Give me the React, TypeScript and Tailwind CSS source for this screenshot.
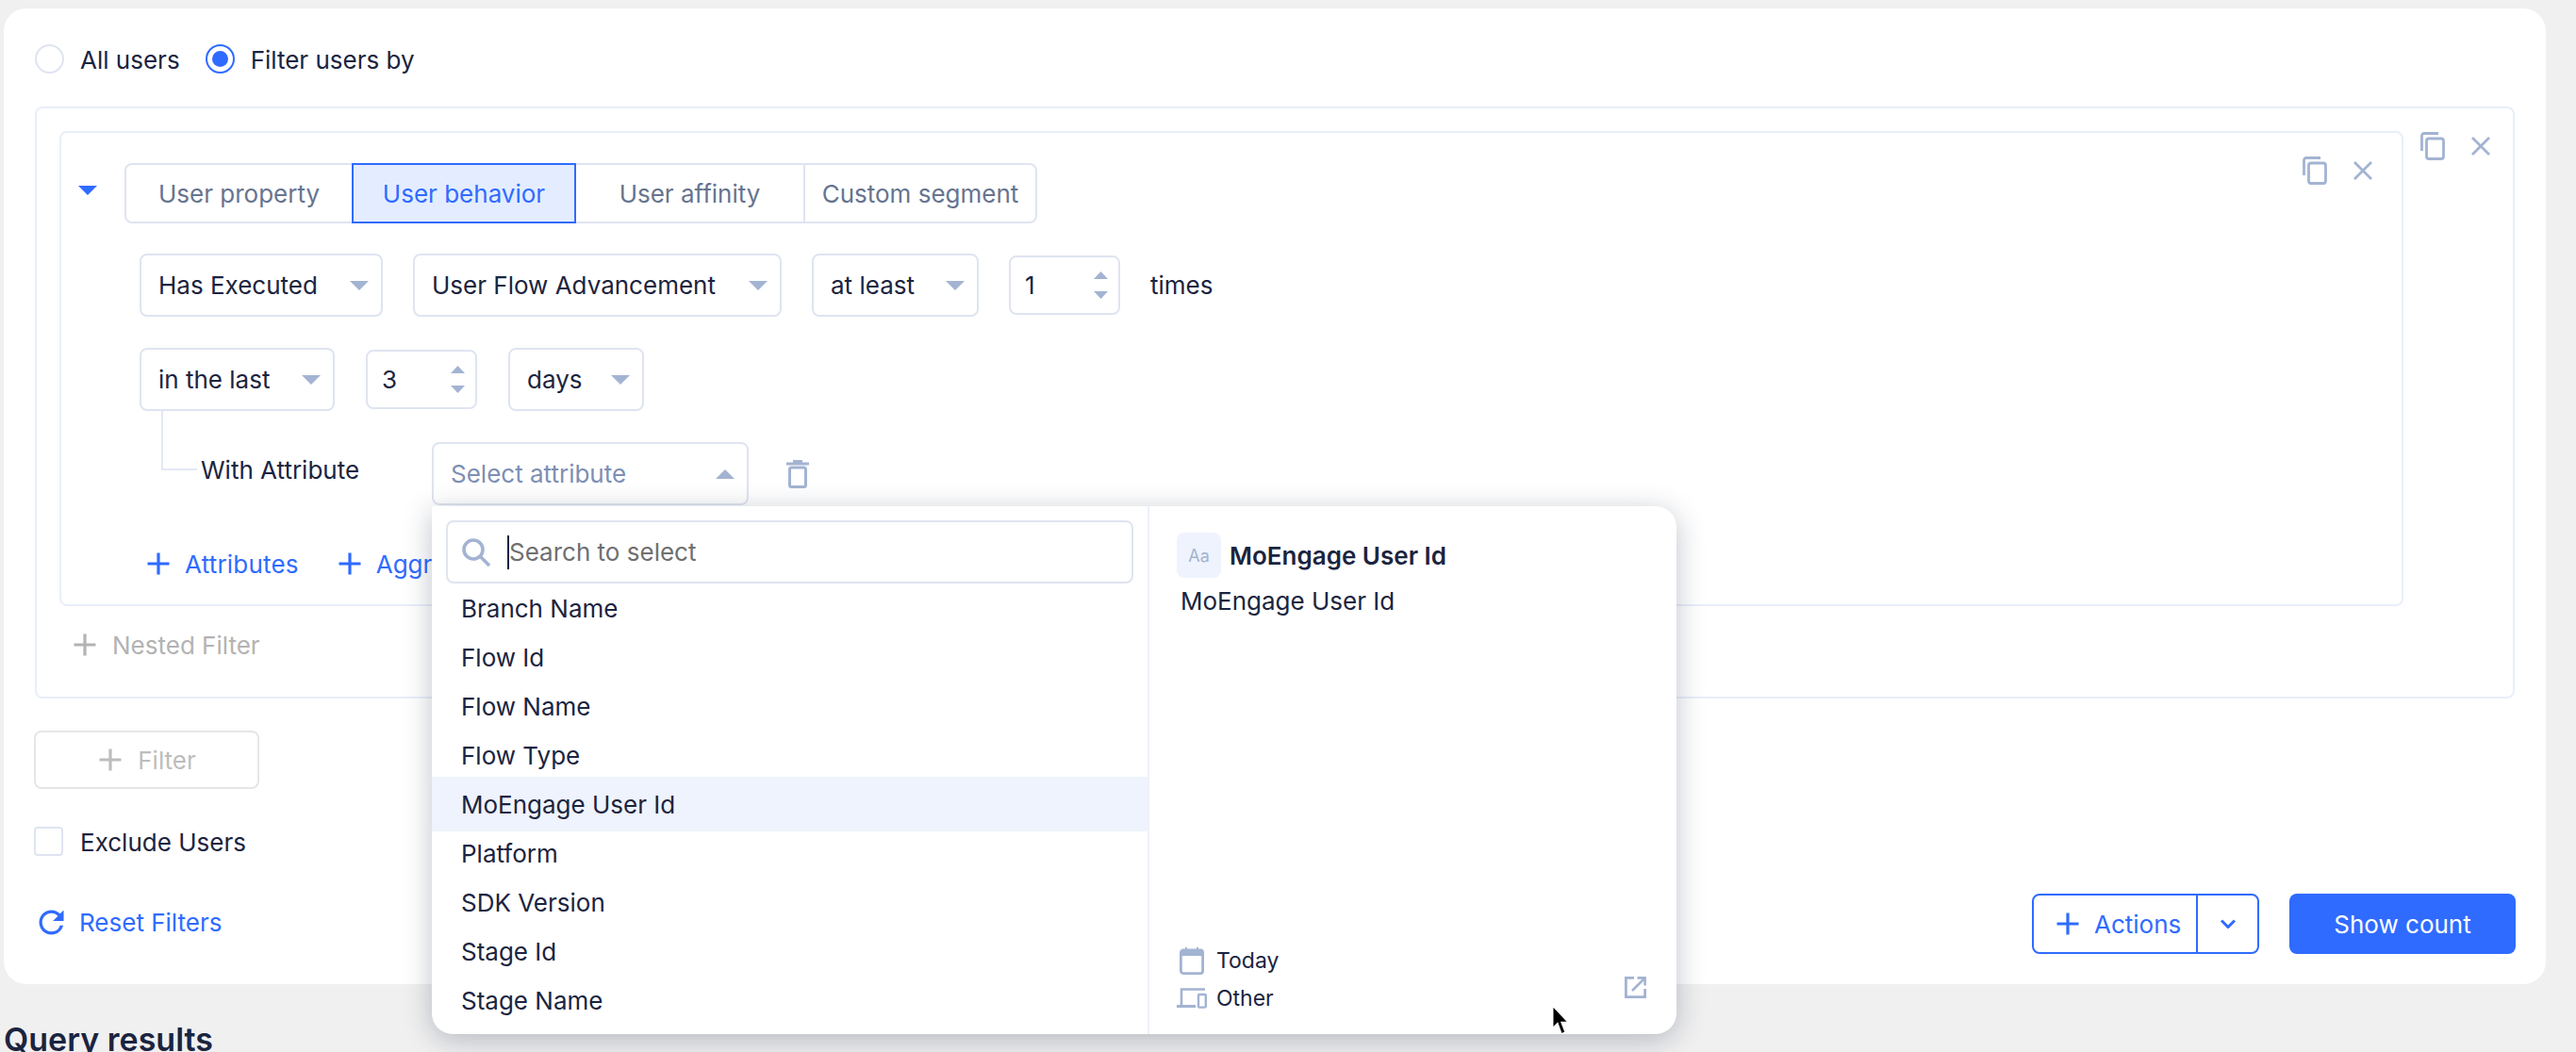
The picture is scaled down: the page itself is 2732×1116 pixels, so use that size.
import { MdRefresh } from "react-icons/md";

function Caret({ up = false, className = "" }: { up?: boolean; className?: string }) {
  return (
    <svg viewBox="0 0 20 10" className={`w-[20px] h-[10px] shrink-0 ${className}`}>
      <path d={up ? "M10 0 L20 10 L0 10 Z" : "M0 0 L20 0 L10 10 Z"} fill="currentColor" />
    </svg>
  );
}

function Plus({ className = "" }: { className?: string }) {
  return (
    <svg viewBox="0 0 24 24" className={`w-[24px] h-[24px] shrink-0 ${className}`}>
      <path d="M12 0.5 V23.5 M0.5 12 H23.5" stroke="currentColor" strokeWidth="3.2" fill="none" />
    </svg>
  );
}

function CopyIcon() {
  return (
    <svg viewBox="0 0 26 30" className="w-[26px] h-[30px] shrink-0">
      <path d="M1.5 20 V4 a2.5 2.5 0 0 1 2.5 -2.5 H19" stroke="currentColor" strokeWidth="2.8" fill="none" />
      <rect x="6.5" y="7" width="18" height="21.5" rx="2.5" stroke="currentColor" strokeWidth="2.8" fill="none" />
    </svg>
  );
}

function CloseIcon() {
  return (
    <svg viewBox="0 0 20 20" className="w-[20px] h-[20px] shrink-0">
      <path d="M1 1 L19 19 M19 1 L1 19" stroke="currentColor" strokeWidth="2.8" fill="none" />
    </svg>
  );
}

function Select({ label, width, placeholder = false, up = false }: { label: string; width: string; placeholder?: boolean; up?: boolean }) {
  return (
    <div className={`${width} h-[67px] rounded-lg border-2 border-[#dfe4f1] flex items-center justify-between pl-[18px] pr-[13px] bg-white`}>
      <span className={placeholder ? "text-[#7d8fb3]" : "text-[#1b2440]"}>{label}</span>
      <Caret up={up} className="text-[#a3b3d2]" />
    </div>
  );
}

function NumberBox({ value }: { value: string }) {
  return (
    <div className="w-[118px] h-[63px] rounded-lg border-2 border-[#dfe4f1] flex items-center justify-between pl-[15px] pr-[11px] text-[#1b2440]">
      <span>{value}</span>
      <div className="flex flex-col gap-[13px] text-[#a3b3d2]">
        <svg viewBox="0 0 15 8" className="w-[15px] h-[8px]"><path d="M7.5 0 L15 8 L0 8 Z" fill="currentColor" /></svg>
        <svg viewBox="0 0 15 8" className="w-[15px] h-[8px]"><path d="M0 0 L15 0 L7.5 8 Z" fill="currentColor" /></svg>
      </div>
    </div>
  );
}

function Tab({ label, width, active = false, divider = false }: { label: string; width: string; active?: boolean; divider?: boolean }) {
  return (
    <div
      className={`${width} flex items-center justify-center ${
        active ? "h-[64px] -my-[2px] bg-[#e4edff] border-2 border-[#2f6bff] text-[#2f6bff]" : "h-full text-[#66748f]"
      } ${divider ? "border-l-2 border-[#dfe4f1]" : ""}`}
    >
      {label}
    </div>
  );
}

const attrs = ["Branch Name", "Flow Id", "Flow Name", "Flow Type", "MoEngage User Id", "Platform", "SDK Version", "Stage Id", "Stage Name"];

function Dropdown() {
  return (
    <div className="absolute left-0 top-[68px] z-10 w-[1320px] h-[560px] bg-white rounded-[22px] rounded-tl-none shadow-[0_6px_30px_rgba(30,40,70,0.28)] flex overflow-hidden">
      <div className="w-[761px] border-r-2 border-[#eef1f8] flex flex-col">
        <div className="mx-[15px] mt-[15px] h-[67px] rounded-lg border-2 border-[#dfe4f1] flex items-center pl-[15px] text-[#6f6f6f] shrink-0">
          <svg viewBox="0 0 30 30" className="w-[30px] h-[30px] shrink-0 text-[#a3b3d2]">
            <circle cx="12" cy="12" r="10" stroke="currentColor" strokeWidth="3.6" fill="none" />
            <path d="M19 19 L29 29" stroke="currentColor" strokeWidth="3.6" />
          </svg>
          <span className="ml-[18px] border-l-2 border-[#1b2440] h-[36px] leading-[36px]">Search to select</span>
        </div>
        <div className="flex flex-col">
          {attrs.map((a) =>
            a === "MoEngage User Id" ? (
              <div key={a} className="h-[58px] -my-[3px] bg-[#eff3fd] flex items-center pl-[31px] text-[#1b2440]">{a}</div>
            ) : (
              <div key={a} className="h-[52px] flex items-center pl-[31px] text-[#1b2440]">{a}</div>
            )
          )}
        </div>
      </div>
      <div className="flex-1 relative pl-[29px] pt-[28px] flex flex-col">
        <div className="flex items-center gap-[9px]">
          <div className="w-[47px] h-[48px] rounded-lg bg-[#eff3fd] flex items-center justify-center text-[18px] text-[#a3b3d2]">Aa</div>
          <span className="font-semibold text-[#1b2440]">MoEngage User Id</span>
        </div>
        <div className="ml-[4px] mt-[5px] text-[#1b2440]">MoEngage User Id</div>
        <div className="mt-auto mb-[22px] flex flex-col gap-[8px] text-[23px] text-[#1b2440]">
          <div className="h-[32px] flex items-center">
            <svg viewBox="0 0 26 29" className="w-[26px] h-[29px] ml-[3px] text-[#a3b3d2]">
              <rect x="1.4" y="3" width="23.2" height="24.6" rx="2.5" stroke="currentColor" strokeWidth="2.8" fill="none" />
              <path d="M1.4 3 H24.6 V9 H1.4 Z M6 0 H8 V4 H6 Z M18 0 H20 V4 H18 Z" fill="currentColor" />
            </svg>
            <span className="ml-[13px]">Today</span>
          </div>
          <div className="h-[32px] flex items-center">
            <svg viewBox="0 0 32 22" className="w-[32px] h-[22px] text-[#a3b3d2]">
              <path d="M30 1.5 H5 V18" stroke="currentColor" strokeWidth="2.6" fill="none" />
              <path d="M0 18 H20 V21 H0 Z" fill="currentColor" />
              <rect x="23" y="7" width="7.8" height="13.6" rx="1" stroke="currentColor" strokeWidth="2.4" fill="none" />
            </svg>
            <span className="ml-[10px]">Other</span>
          </div>
        </div>
        <svg viewBox="0 0 23 23" className="absolute right-[32px] bottom-[38px] w-[23px] h-[23px] text-[#a3b3d2]">
          <path d="M10 1.4 H1.4 V21.6 H21.6 V13" stroke="currentColor" strokeWidth="2.8" fill="none" />
          <path d="M8 15 L21 2 M13.5 1.4 H21.6 V9.5" stroke="currentColor" strokeWidth="2.6" fill="none" />
        </svg>
        <svg viewBox="0 0 20 32" className="absolute left-[425px] top-[529px] w-[22px] h-[33px]">
          <path d="M2 1 L2 24 L7 19 L11 30 L15 28 L11 18 L18 18 Z" fill="#000" stroke="#fff" strokeWidth="1.4" />
        </svg>
      </div>
    </div>
  );
}

export default function App() {
  return (
    <div className="w-[2732px] h-[1116px] overflow-hidden bg-[#f0f0f0] pt-[9px] text-[26px] text-[#1b2440] font-['Inter','Liberation_Sans',sans-serif]">
      <div className="ml-[4px] w-[2696px] h-[1035px] bg-white rounded-[24px] px-[33px] pt-[38px]">
        <div className="h-[31px] flex items-center">
          <div className="w-[31px] h-[31px] rounded-full border-2 border-[#dfe4f1]" />
          <span className="ml-[17px] pt-[2px]">All users</span>
          <div className="ml-[27px] w-[31px] h-[31px] rounded-full border-2 border-[#2f6bff] flex items-center justify-center">
            <div className="w-[17px] h-[17px] rounded-full bg-[#2f6bff]" />
          </div>
          <span className="ml-[17px] pt-[2px]">Filter users by</span>
        </div>

        <div className="mt-[35px] w-[2630px] h-[628px] rounded-lg border-2 border-[#e9eef9] pl-[24px] pt-[24px]">
          <div className="flex items-start">
            <div className="w-[2486px] h-[504px] rounded-lg border-2 border-[#e9eef9] relative pl-[67px] pt-[32px]">
              <div className="absolute left-[18px] top-[56px]"><Caret className="text-[#2f6bff]" /></div>
              <div className="absolute right-[31px] top-[25px] h-[30px] flex items-center gap-[28px] text-[#a3b3d2]">
                <CopyIcon />
                <CloseIcon />
              </div>

              <div className="w-[968px] h-[64px] rounded-lg border-2 border-[#dfe4f1] flex">
                <Tab label="User property" width="w-[239px]" />
                <Tab label="User behavior" width="w-[238px]" active />
                <Tab label="User affinity" width="w-[241px]" />
                <Tab label="Custom segment" width="w-[246px]" divider />
              </div>

              <div className="ml-[16px] mt-[32px] flex items-center">
                <Select label="Has Executed" width="w-[258px]" />
                <div className="ml-[32px]"><Select label="User Flow Advancement" width="w-[391px]" /></div>
                <div className="ml-[32px]"><Select label="at least" width="w-[177px]" /></div>
                <div className="ml-[32px]"><NumberBox value="1" /></div>
                <span className="ml-[32px]">times</span>
              </div>

              <div className="ml-[16px] mt-[33px] flex items-center">
                <Select label="in the last" width="w-[207px]" />
                <div className="ml-[33px]"><NumberBox value="3" /></div>
                <div className="ml-[33px]"><Select label="days" width="w-[144px]" /></div>
              </div>

              <div className="ml-[39px] flex">
                <div className="w-[38px] h-[63px] border-l-2 border-b-2 border-[#e3e8f4]" />
                <div className="ml-[4px] w-[245px] mt-[45px] leading-[36px]">With Attribute</div>
                <div className="mt-[33px] relative">
                  <Select label="Select attribute" width="w-[336px]" placeholder up />
                  <Dropdown />
                </div>
                <svg viewBox="0 0 24 30" className="ml-[40px] mt-[52px] w-[24px] h-[30px] text-[#a3b3d2]">
                  <path d="M0 2.6 H24 V5.4 H0 Z M7 0 H17 V3 H7 Z" fill="currentColor" />
                  <rect x="3.5" y="8" width="17" height="20.5" rx="2" stroke="currentColor" strokeWidth="3" fill="none" />
                </svg>
              </div>

              <div className="ml-[24px] mt-[50px] h-[24px] flex items-center text-[#2f6bff]">
                <Plus />
                <span className="ml-[16px] tracking-[0.2px]">Attributes</span>
                <Plus className="ml-[42px]" />
                <span className="ml-[16px]">Aggregation</span>
              </div>
            </div>
            <div className="ml-[18px] mt-[1px] h-[30px] flex items-center gap-[28px] text-[#a3b3d2]">
              <CopyIcon />
              <CloseIcon />
            </div>
          </div>
          <div className="ml-[15px] mt-[29px] h-[24px] flex items-center text-[#b3b3b3]">
            <Plus />
            <span className="ml-[17px]">Nested Filter</span>
          </div>
        </div>

        <div className="mt-[34px] -ml-[1px] w-[239px] h-[62px] rounded-lg border-2 border-[#e6e6e6] flex items-center justify-center text-[#bdbdbd] pl-[2px]">
          <Plus />
          <span className="ml-[17px]">Filter</span>
        </div>

        <div className="mt-[40px] h-[31px] flex items-center">
          <div className="-ml-[1px] w-[31px] h-[31px] rounded border-2 border-[#dfe4f1]" />
          <span className="ml-[18px] pt-[1px]">Exclude Users</span>
        </div>

        <div className="mt-[40px] w-[2631px] h-[64px] flex items-center justify-between">
          <div className="flex items-center text-[#2f6bff] -mt-[3px]">
            <MdRefresh className="w-[39px] h-[39px] -ml-[2px]" />
            <span className="ml-[10px]">Reset Filters</span>
          </div>
          <div className="flex items-center">
            <div className="w-[241px] h-[64px] rounded-lg border-2 border-[#2f6bff] flex items-center text-[#2f6bff]">
              <Plus className="ml-[24px]" />
              <span className="ml-[16px]">Actions</span>
              <div className="ml-auto w-[65px] h-full border-l-2 border-[#2f6bff] flex items-center justify-center">
                <svg viewBox="0 0 16 10" className="w-[16px] h-[10px]">
                  <path d="M1 1.5 L8 8.5 L15 1.5" stroke="currentColor" strokeWidth="3" fill="none" />
                </svg>
              </div>
            </div>
            <div className="ml-[32px] w-[240px] h-[64px] rounded-lg bg-[#2f6bff] text-white flex items-center justify-center">Show count</div>
          </div>
        </div>
      </div>
      <div className="ml-[4px] mt-[41px] text-[34px] leading-[36px] font-semibold">Query results</div>
    </div>
  );
}
